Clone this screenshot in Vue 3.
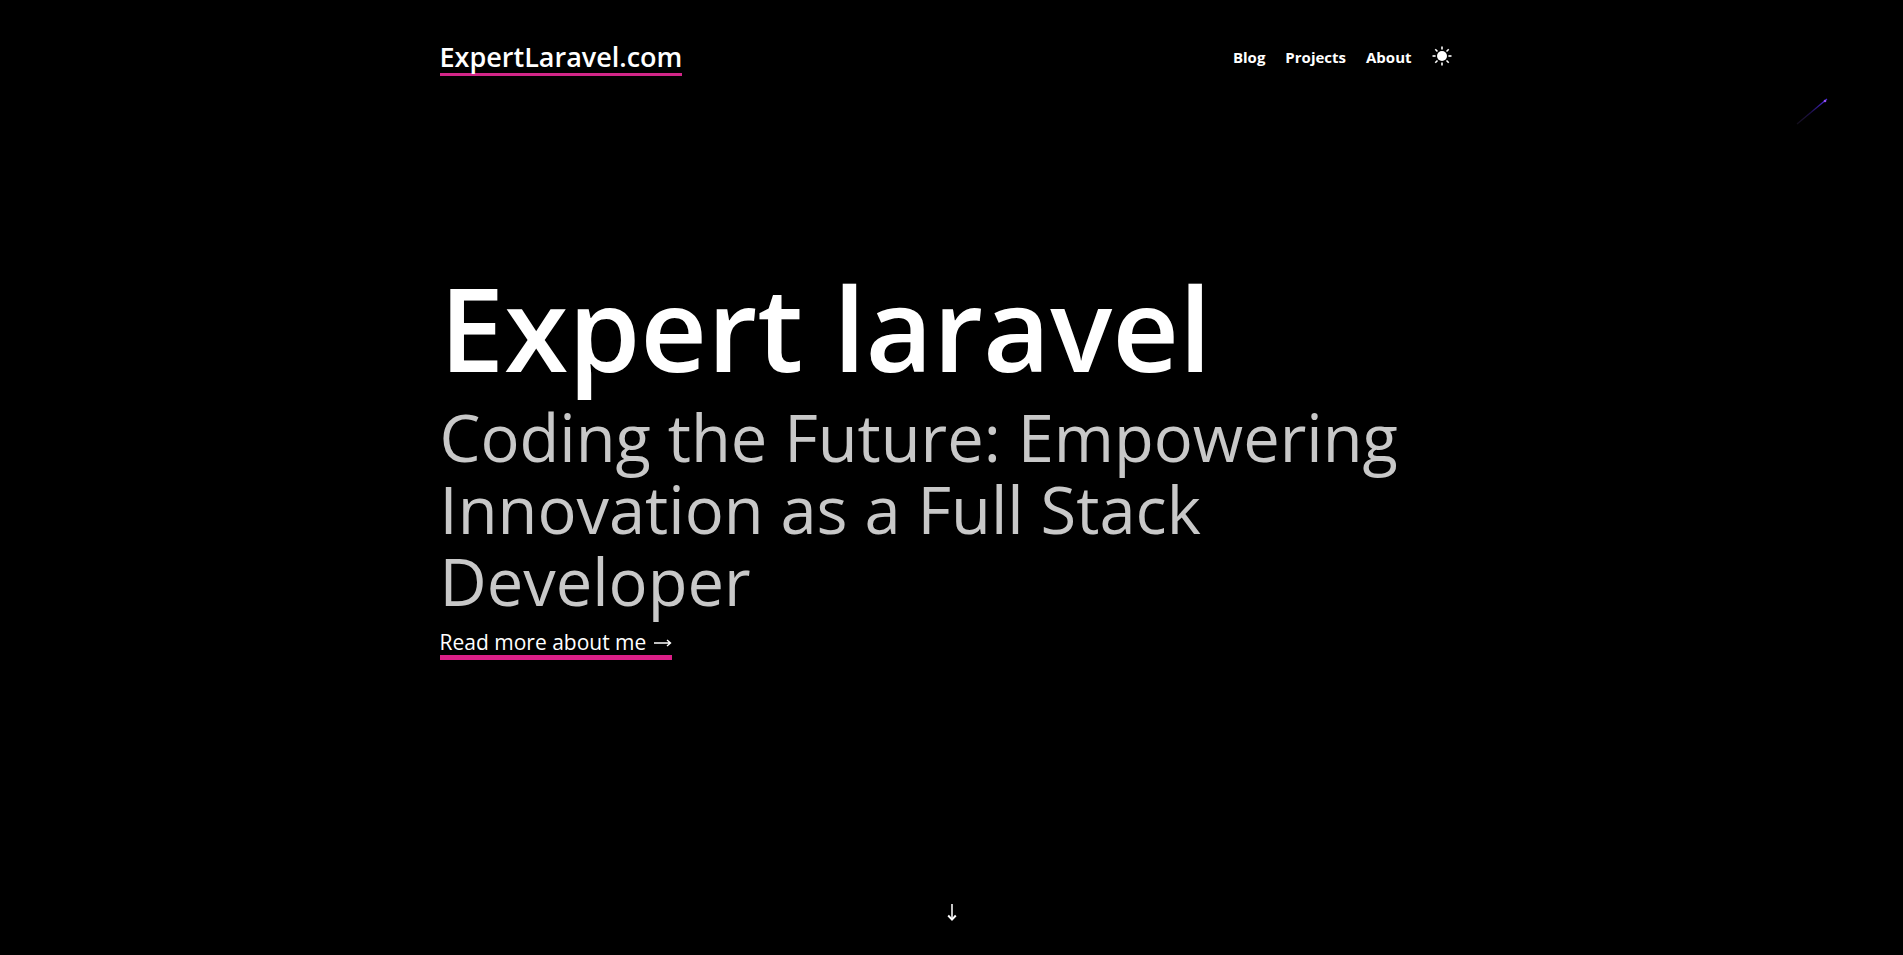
<script setup>
import { ref } from 'vue'

const links = [
  { label: 'Blog', href: '#blog' },
  { label: 'Projects', href: '#projects' },
  { label: 'About', href: '#about' },
]
const rays = [0, 45, 90, 135, 180, 225, 270, 315]
const light = ref(false)
</script>

<template>
  <div class="page" :class="{ light }">
    <svg class="meteor" viewBox="0 0 32 28" aria-hidden="true">
      <defs>
        <linearGradient id="trail" gradientUnits="userSpaceOnUse" x1="0" y1="27" x2="30" y2="2">
          <stop offset="0" stop-color="#2c2140" stop-opacity="0.4" />
          <stop offset="0.5" stop-color="#1c0e48" />
          <stop offset="1" stop-color="#4c2be0" />
        </linearGradient>
      </defs>
      <path d="M1 26 L31 1" stroke="url(#trail)" stroke-width="1.2" />
      <circle cx="29" cy="3" r="1.3" fill="#9450f5" />
    </svg>

    <header class="header">
      <a class="brand" href="#home">ExpertLaravel.com</a>
      <nav class="nav" aria-label="Main">
        <a v-for="link in links" :key="link.label" class="nav-link" :href="link.href">{{ link.label }}</a>
        <button class="theme" type="button" aria-label="Toggle theme" @click="light = !light">
          <svg viewBox="0 0 20 20" aria-hidden="true">
            <circle cx="10" cy="10" r="5" fill="currentColor" />
            <path
              v-for="angle in rays"
              :key="angle"
              d="M10 0.5 V3.6"
              :transform="`rotate(${angle} 10 10)`"
              stroke="currentColor"
              stroke-width="1.6"
            />
          </svg>
        </button>
      </nav>
    </header>

    <main class="hero">
      <h1 class="title">Expert laravel</h1>
      <p class="tagline">Coding the Future: Empowering Innovation as a Full Stack Developer</p>
      <a class="more" href="#about">
        Read more about me
        <svg class="more-arrow" viewBox="0 0 18 12" aria-hidden="true">
          <path d="M0 7 H16 M13 4 L16.5 7 L13 10" fill="none" stroke="currentColor" stroke-width="1.4" />
        </svg>
      </a>
    </main>

    <footer class="footer">
      <a class="down" href="#blog" aria-label="Scroll down">
        <svg viewBox="0 0 10 18" aria-hidden="true">
          <path d="M5 0 V15" stroke="#c4c4c4" stroke-width="2" />
          <path d="M1.2 11.5 L5 15.6 L8.8 11.5" fill="none" stroke="#fff" stroke-width="2" />
        </svg>
      </a>
    </footer>
  </div>
</template>

<style>
body {
  background: #000;
}
</style>

<style scoped>
.page {
  position: relative;
  box-sizing: border-box;
  min-height: 100vh;
  display: flex;
  flex-direction: column;
  background: #000;
  color: #fff;
  font-family: "Open Sans", "Noto Sans", sans-serif;
}
.page.light {
  background: #fff;
  color: #111;
}
.meteor {
  position: absolute;
  top: 98px;
  right: 75px;
  width: 32px;
  height: 28px;
}
.header,
.hero {
  box-sizing: border-box;
  width: 100%;
  max-width: 1024px;
  margin: 0 auto;
}
.header {
  display: flex;
  align-items: center;
  justify-content: space-between;
  padding-top: 40px;
  padding-right: 12px;
}
.brand {
  border-bottom: 3px solid #d32688;
  color: inherit;
  font-size: 27px;
  font-weight: 600;
  line-height: 33px;
  text-decoration: none;
}
.nav {
  display: flex;
  align-items: center;
  gap: 20px;
}
.nav-link {
  color: inherit;
  font-size: 15px;
  font-weight: 700;
  line-height: 22px;
  padding-bottom: 2px;
  text-decoration: none;
}
.theme {
  width: 20px;
  height: 20px;
  margin-bottom: 4px;
  padding: 0;
  border: 0;
  background: none;
  color: inherit;
  cursor: pointer;
}
.theme svg,
.down svg {
  display: block;
  width: 100%;
}
.hero {
  flex: 1;
  display: flex;
  flex-direction: column;
  align-items: flex-start;
  justify-content: center;
  padding-bottom: 58px;
}
.title {
  margin: 0 0 10px;
  font-size: 116px;
  font-weight: 600;
  line-height: 128px;
}
.tagline {
  margin: 0 0 12px;
  color: #c8c8c8;
  font-size: 65px;
  line-height: 72px;
}
.more {
  display: flex;
  align-items: center;
  gap: 8px;
  border-bottom: 5px solid #db1f87;
  color: inherit;
  font-size: 21px;
  line-height: 26px;
  text-decoration: none;
}
.more-arrow {
  width: 18px;
  height: 12px;
}
.footer {
  display: flex;
  justify-content: center;
  padding-bottom: 33px;
}
.down {
  width: 10px;
}
</style>
